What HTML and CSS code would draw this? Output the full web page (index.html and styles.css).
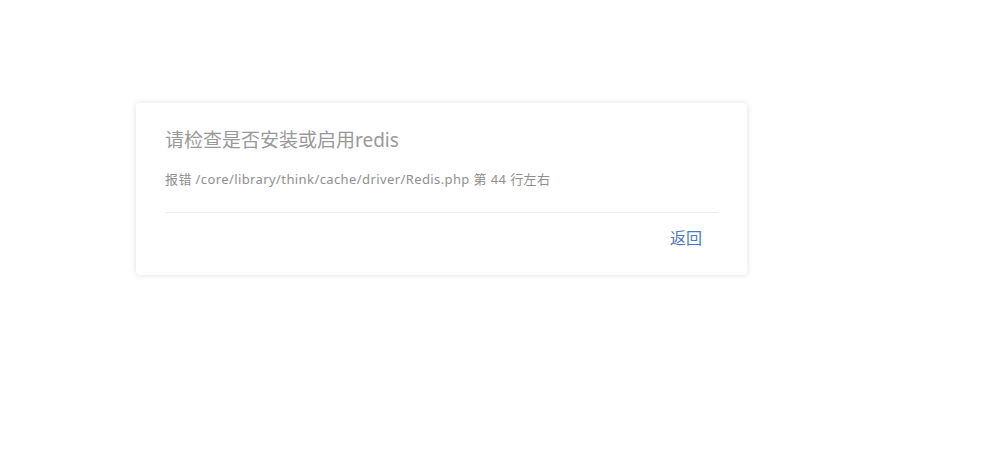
FILE: index.html
```html
<!DOCTYPE html>
<html lang="zh-CN">
<head>
<meta charset="utf-8">
<title>提示</title>
<link rel="stylesheet" href="styles.css">
</head>
<body>
<div class="card">
  <h1 class="title">请检查是否安装或启用redis</h1>
  <p class="detail">报错 /core/library/think/cache/driver/Redis.php 第 44 行左右</p>
  <div class="actions">
    <a class="back" href="#">返回</a>
  </div>
</div>
</body>
</html>
```

FILE: styles.css
```css
html, body {
  margin: 0;
  padding: 0;
  background: #fff;
}
body {
  font-family: "Noto Sans", "Noto Sans CJK SC", sans-serif;
  padding-top: 103px;
  padding-bottom: 20px;
}
.card {
  box-sizing: border-box;
  width: 611px;
  margin-left: 136px;
  padding: 22px 29px 25px 29px;
  background: #fff;
  border-radius: 4px;
  box-shadow: 0 0 6px rgba(0, 0, 0, 0.13);
}
.title {
  margin: 0;
  font-size: 19px;
  font-weight: normal;
  line-height: 30px;
  color: #999;
}
.detail {
  margin: 14px 0 0 0;
  font-size: 13px;
  line-height: 20px;
  letter-spacing: 0.4px;
  color: #8f8f8f;
  padding-bottom: 23px;
  border-bottom: 1px solid #eee;
}
.actions {
  display: flex;
  justify-content: flex-end;
  padding: 13px 16px 0 0;
}
.back {
  font-size: 16px;
  line-height: 24px;
  color: #4a7ab8;
  text-decoration: none;
}
```
